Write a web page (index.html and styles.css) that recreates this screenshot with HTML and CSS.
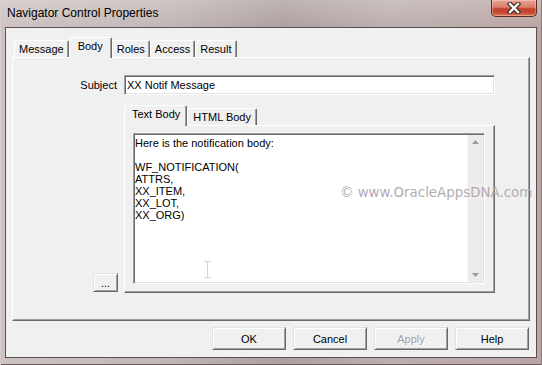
FILE: index.html
```html
<!DOCTYPE html>
<html lang="en">
<head>
  <meta charset="UTF-8" />
  <title>Navigator Control Properties</title>
  <link rel="stylesheet" href="styles.css">
</head>
<body>

<div class="window">
  <div class="titlebar">
    <span class="title">Navigator Control Properties</span>
    <div class="close-btn">
      <svg width="14" height="12" viewBox="0 0 14 12">
        <path d="M3 2 L11 10 M11 2 L3 10" stroke="#3c2a28" stroke-width="4.6" stroke-linecap="square" fill="none"/>
        <path d="M3 2 L11 10 M11 2 L3 10" stroke="#fff" stroke-width="2.4" stroke-linecap="square" fill="none"/>
      </svg>
    </div>
  </div>

  <div class="client">
    <div class="tabs main-tabs">
      <div class="tab">Message</div>
      <div class="tab active">Body</div>
      <div class="tab">Roles</div>
      <div class="tab">Access</div>
      <div class="tab">Result</div>
    </div>

    <div class="panel main-panel">
      <div class="form">
        <label class="field-label">Subject</label>
        <div class="edit">XX Notif Message</div>

        <button class="btn dots-btn">...</button>

        <div class="body-tabs">
          <div class="tabs inner-tabs">
            <div class="tab active">Text Body</div>
            <div class="tab">HTML Body</div>
          </div>
          <div class="panel inner-panel">
            <div class="memo">
              <div class="memo-text">Here is the notification body:

WF_NOTIFICATION(
ATTRS,
XX_ITEM,
XX_LOT,
XX_ORG)</div>
              <div class="scrollbar">
                <svg width="7" height="4" viewBox="0 0 7 4"><path d="M0 4 L3.5 0 L7 4 Z" fill="#9c9c9c"/></svg>
                <svg width="7" height="4" viewBox="0 0 7 4"><path d="M0 0 L3.5 4 L7 0 Z" fill="#9c9c9c"/></svg>
              </div>
            </div>
          </div>
        </div>
      </div>
    </div>

    <div class="buttons">
      <button class="btn">OK</button>
      <button class="btn">Cancel</button>
      <button class="btn disabled">Apply</button>
      <button class="btn">Help</button>
    </div>
  </div>

  <div class="watermark">© www.OracleAppsDNA.com</div>
  <svg class="ibeam" width="8" height="17" viewBox="0 0 8 17">
    <path d="M0 0.5 H7 M3.5 0.5 V16.5 M0 16.5 H7" stroke="#d4d4d4" stroke-width="1" fill="none"/>
  </svg>
</div>

</body>
</html>
```

FILE: styles.css
```css
* {
  box-sizing: border-box;
}

body {
  margin: 0;
  font-family: 'Liberation Sans', Arial, sans-serif;
  font-size: 11px;
  color: #000;
  overflow: hidden;
}

.window {
  position: relative;
  width: 542px;
  height: 365px;
  display: flex;
  flex-direction: column;
  background:
    linear-gradient(to bottom, rgba(255,255,255,0.22), rgba(255,255,255,0) 28px),
    linear-gradient(to right, #cdc3c3 0%, #c2b6b6 30%, #ad9fa0 52%, #bcaeae 72%, #b9a5a5 100%);
  box-shadow: inset 1px 0 #d8cccc, inset -1px 0 #8d7878, inset 0 -1px #6c5a5a;
}

.titlebar {
  height: 27px;
  display: flex;
  justify-content: space-between;
  align-items: flex-start;
  padding: 0 5px 0 7px;
}

.title {
  font-size: 12px;
  line-height: 27px;
}

.close-btn {
  width: 46px;
  height: 17px;
  display: flex;
  align-items: center;
  justify-content: center;
  border: 1px solid #5e2a22;
  border-top: 0;
  border-radius: 0 0 5px 5px;
  background: linear-gradient(to bottom, #e8a391 0%, #db7c68 45%, #c0412b 55%, #c64b33 80%, #e07d5e 100%);
  box-shadow: inset 0 0 0 1px rgba(255,255,255,0.3);
}

.client {
  height: 331px;
  margin: 0 5px;
  background: #f0f0f0;
  border: 1px solid #5b5050;
  display: flex;
  flex-direction: column;
}

/* tab strips */
.tabs {
  display: flex;
  align-items: flex-end;
  height: 20px;
}

.main-tabs {
  margin: 9px 0 0 8px;
}

.tab {
  height: 17px;
  padding: 0 4px;
  line-height: 16px;
  background: #f0f0f0;
  border: 1px solid #fff;
  border-bottom: 0;
  border-right-color: #696969;
  border-radius: 2px 2px 0 0;
  box-shadow: inset -1px 0 #a0a0a0;
  white-space: nowrap;
}

.tab.active {
  height: 21px;
  padding: 0 8px;
  margin-bottom: -1px;
  position: relative;
  z-index: 1;
}

.inner-tabs .tab {
  padding: 0 5px 0 5px;
}

.inner-tabs .tab.active {
  padding: 0 6px 0 7px;
}

.panel {
  border: 1px solid #fff;
  border-right-color: #696969;
  border-bottom-color: #696969;
  box-shadow: inset -1px -1px #a0a0a0;
}

.main-panel {
  height: 264px;
  margin: 0 6px;
}

.form {
  display: grid;
  grid-template-columns: 111px 371px;
  grid-template-rows: 20px 188px;
  row-gap: 10px;
  padding-top: 17px;
}

.field-label {
  align-self: center;
  text-align: right;
  padding-right: 7px;
}

.edit {
  height: 20px;
  padding: 0 2px;
  line-height: 18px;
  background: #fff;
  border: 1px solid;
  border-color: #a0a0a0 #fff #fff #a0a0a0;
  box-shadow: inset 1px 1px #696969, inset -1px -1px #e3e3e3;
  white-space: nowrap;
}

/* push buttons */
.btn {
  font: inherit;
  color: #000;
  padding: 0;
  width: 74px;
  height: 23px;
  background: #f0f0f0;
  border: 1px solid;
  border-color: #e3e3e3 #696969 #696969 #e3e3e3;
  box-shadow: inset 1px 1px #fff, inset -1px -1px #a0a0a0;
}

.btn.disabled {
  color: #a0a0a0;
  text-shadow: 1px 1px #fff;
}

.dots-btn {
  width: 25px;
  height: 19px;
  align-self: end;
  justify-self: end;
  margin: 0 6px 1px 0;
  line-height: 12px;
}

.inner-panel {
  height: 168px;
  padding: 7px 9px 7px 8px;
}

.memo {
  display: flex;
  height: 151px;
  background: #fff;
  border: 1px solid;
  border-color: #a0a0a0 #fff #fff #a0a0a0;
  box-shadow: inset 1px 1px #696969, inset -1px -1px #e3e3e3;
}

.memo-text {
  flex: 1;
  padding: 3px 0 0 1px;
  line-height: 12px;
  white-space: pre;
}

.scrollbar {
  width: 16px;
  margin: 1px 1px 1px 0;
  display: flex;
  flex-direction: column;
  justify-content: space-between;
  align-items: center;
  padding: 5px 0 5px;
  background: #ececec;
  box-shadow: inset 1px 0 #f8f8f8;
}

.buttons {
  display: flex;
  justify-content: flex-end;
  gap: 7px;
  margin: 6px 7px 0 0;
}

.watermark {
  position: absolute;
  left: 340px;
  top: 185px;
  font-family: 'DejaVu Sans', sans-serif;
  font-size: 13.4px;
  line-height: 16px;
  color: #b3abb3;
  white-space: nowrap;
}

.ibeam {
  position: absolute;
  left: 204px;
  top: 261px;
}
```
